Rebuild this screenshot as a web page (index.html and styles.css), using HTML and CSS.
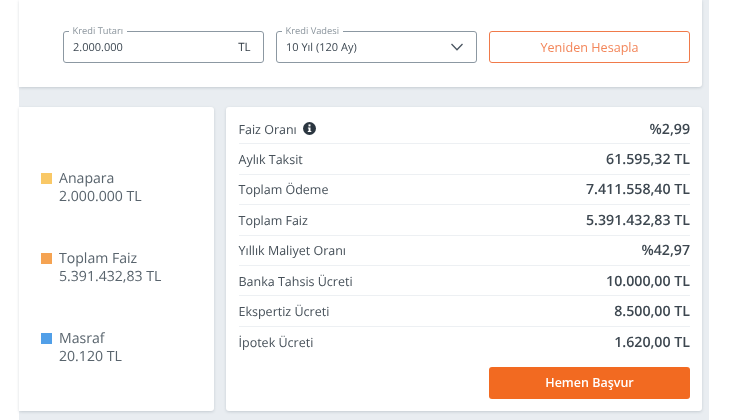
FILE: index.html
```html
<!DOCTYPE html>
<html lang="tr">
<head>
<meta charset="utf-8">
<title>Kredi Hesaplama</title>
<link rel="stylesheet" href="styles.css">
</head>
<body>
<div class="panel">
  <section class="card form">
    <div class="field amount">
      <span class="legend">Kredi Tutarı</span>
      <span class="value">2.000.000</span>
      <span class="unit">TL</span>
    </div>
    <div class="field term">
      <span class="legend">Kredi Vadesi</span>
      <span class="value">10 Yıl (120 Ay)</span>
      <svg class="chevron" width="14" height="8" viewBox="0 0 14 8" aria-hidden="true"><path d="M1.5 1l5.5 5.7L12.5 1" fill="none" stroke="#4a5560" stroke-width="1.3"/></svg>
    </div>
    <button class="btn outline">Yeniden Hesapla</button>
  </section>
  <div class="columns">
    <section class="card legend-card">
      <div class="item"><i class="swatch yellow"></i><div><div>Anapara</div><div>2.000.000 TL</div></div></div>
      <div class="item"><i class="swatch orange"></i><div><div>Toplam Faiz</div><div>5.391.432,83 TL</div></div></div>
      <div class="item"><i class="swatch blue"></i><div><div>Masraf</div><div>20.120 TL</div></div></div>
    </section>
    <section class="card summary">
      <div class="row"><span class="label">Faiz Oranı
        <svg class="info" width="13" height="13" viewBox="0 0 13 13" aria-hidden="true"><circle cx="6.5" cy="6.5" r="6.5" fill="#2b3640"/><rect x="5.5" y="2.4" width="2" height="2" fill="#fff"/><path d="M4.9 5.4h2.6v3.6h.8v1H4.8V9h.8V6.4h-.7z" fill="#fff"/></svg></span><b>%2,99</b></div>
      <div class="row"><span class="label">Aylık Taksit</span><b>61.595,32 TL</b></div>
      <div class="row"><span class="label">Toplam Ödeme</span><b>7.411.558,40 TL</b></div>
      <div class="row"><span class="label">Toplam Faiz</span><b>5.391.432,83 TL</b></div>
      <div class="row"><span class="label">Yıllık Maliyet Oranı</span><b>%42,97</b></div>
      <div class="row"><span class="label">Banka Tahsis Ücreti</span><b>10.000,00 TL</b></div>
      <div class="row"><span class="label">Ekspertiz Ücreti</span><b>8.500,00 TL</b></div>
      <div class="row last"><span class="label">İpotek Ücreti</span><b>1.620,00 TL</b></div>
      <div class="actions"><button class="btn solid">Hemen Başvur</button></div>
    </section>
  </div>
</div>
</body>
</html>
```
FILE: styles.css
```css
* { box-sizing: border-box; }
html, body { margin: 0; height: 100%; background: #fff; overflow: hidden; }
body { font-family: "Open Sans", "Liberation Sans", sans-serif; color: #3d4852; text-rendering: geometricPrecision; }
.panel { margin-left: 19px; width: 690px; height: 420px; background: #e9edf1; filter: blur(.35px); }
.card { background: #fff; border-radius: 0 3px 3px 0; box-shadow: 0 1px 3px rgba(60,75,90,.2); }
.form { width: 683px; height: 87px; padding: 31px 12px 0 44px; display: flex; gap: 12.5px; align-items: flex-start; border-radius: 0 0 3px 0; }
.field { position: relative; flex: none; height: 32px; border: 1px solid #8c98a2; border-radius: 3px; display: flex; align-items: center; justify-content: space-between; padding: 0 12px 0 9px; font-size: 11px; }
.amount { width: 200.5px; }
.term { width: 200.5px; }
.legend { position: absolute; top: -7px; left: 4.5px; padding: 0 4px; background: #fff; font-size: 9.3px; line-height: 12px; color: #8a949c; }
.unit { color: #333d46; font-size: 11.5px; }
.btn { font-family: inherit; flex: none; width: 201px; height: 32px; border-radius: 3px; }
.outline { background: #fff; border: 1px solid #f07a4a; color: #f3865a; font-size: 12.6px; }
.solid { background: #f26a21; border: 0; color: #fff; font-size: 12.5px; font-weight: 600; }
.columns { display: flex; gap: 12.5px; margin: 19.5px 7px 0 0; height: 304.5px; }
.legend-card { width: 194.5px; padding: 63px 0 0 21.5px; }
.item { display: flex; gap: 7.5px; font-size: 14.1px; line-height: 18px; color: #59646d; height: 80px; }
.swatch { width: 11px; height: 11px; margin-top: 3.5px; flex: none; }
.yellow { background: #f9c866; }
.orange { background: #f5a352; }
.blue { background: #519fe8; }
.summary { flex: 1; padding: 7.5px 12px 0 12.5px; border-radius: 3px; }
.row { height: 30.4px; border-bottom: 1px solid #edf0f3; display: flex; justify-content: space-between; align-items: center; padding-top: 1px; }
.row.last { border-bottom: 0; }
.label { font-size: 12.5px; color: #465059; display: flex; align-items: center; gap: 6px; }
.info { margin-top: -1px; }
.row b { font-size: 14.2px; font-weight: 600; color: #3d4750; }
.actions { display: flex; justify-content: flex-end; margin-top: 9.5px; }
```
